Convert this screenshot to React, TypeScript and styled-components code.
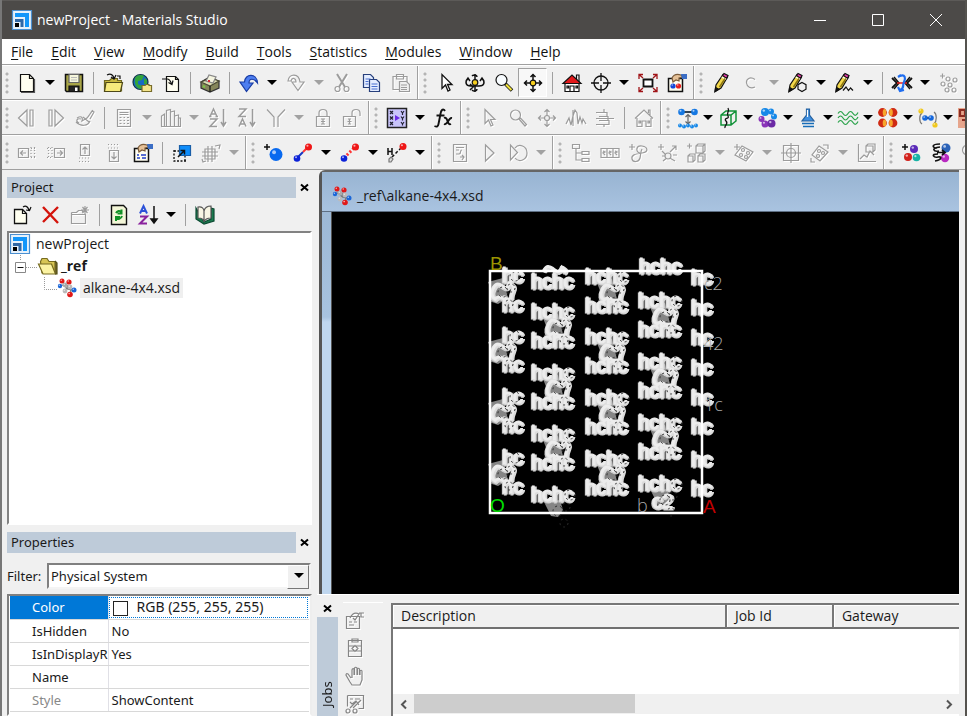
import React from "react";
import styled, { createGlobalStyle, css } from "styled-components";

const Global = createGlobalStyle`
  * { box-sizing: border-box; }
  html, body, #root { height: 100%; }
  body {
    margin: 0;
    overflow: hidden;
    background: #fff;
    color: #1a1a1a;
    font: 14px/20px "Open Sans", "Noto Sans", sans-serif;
  }
  button, select { font: inherit; color: inherit; }
`;

/* ---------- shared colours ---------- */
const face = "#f0f0f0";
const edge = "#a0a0a0";
const caption = "#becbd9";
const ui = '"Noto Sans", "Open Sans", sans-serif';

/* ---------- window frame ---------- */
const Frame = styled.div`
  height: 100vh;
  display: flex;
  flex-direction: column;
  border-left: 2px solid #777;
  border-right: 2px solid #55534f;
  background: ${face};
`;

const TitleBar = styled.header`
  display: flex;
  align-items: center;
  flex: none;
  height: 39px;
  padding-left: 10px;
  gap: 5px;
  background: #4c4a48;
  border-top: 1px solid #5c5a58;
  color: #fff;
`;

const TitleText = styled.h1`
  flex: 1;
  margin: 0;
  font-size: 14px;
  font-weight: 400;
`;

const WindowButtons = styled.div`
  display: flex;
`;

const WindowButton = styled.button`
  width: 58px;
  height: 38px;
  padding: 0;
  border: 0;
  background: transparent;
  color: #fff;
  display: grid;
  place-items: center;
`;

const MenuBar = styled.nav`
  display: flex;
  align-items: center;
  gap: 18px;
  flex: none;
  height: 26px;
  padding-left: 9px;
  background: #fff;
  border-bottom: 1px solid ${edge};
`;

const MenuButton = styled.button`
  padding: 0;
  border: 0;
  background: transparent;
  line-height: 20px;
  color: #111;
`;

const Mnemonic = styled.span`
  text-decoration: underline;
  text-underline-offset: 2px;
`;

/* ---------- toolbars ---------- */
const ToolRow = styled.div`
  display: flex;
  flex: none;
  height: 35px;
  padding-top: 1px;
  overflow: hidden;
  border-bottom: 1px solid ${edge};
  box-shadow: inset 0 1px 0 #fff;
`;

const ToolGroup = styled.div`
  display: flex;
  align-items: center;
  flex: none;
  padding-right: 2px;
  border-right: 1px solid ${edge};
  box-shadow: 1px 0 0 #fff;
  margin-right: 1px;
`;

const Grip = styled.span<{ $first?: boolean }>`
  flex: none;
  width: ${(p) => (p.$first ? 10 : 12)}px;
  height: 24px;
  background: radial-gradient(circle at 50% 3px, #b4b4b4 1px, transparent 2px) 0 0 / 100% 6px;
`;

const ToolButton = styled.button<{ $off?: boolean; $pressed?: boolean; $tight?: boolean }>`
  flex: none;
  display: grid;
  place-items: center;
  width: ${(p) => (p.$tight ? 27 : 29)}px;
  height: 29px;
  padding: 0;
  border: 1px solid transparent;
  background: transparent;
  color: ${(p) => (p.$off ? "#9c9c9c" : "#111")};
  ${(p) => p.$off && css`svg { filter: drop-shadow(1px 1px 0 #fff); }`}
  ${(p) =>
    p.$pressed &&
    css`
      background: #f8f8f8;
      border-color: #a0a0a0 #fff #fff #a0a0a0;
    `}
`;

const DropButton = styled.button<{ $off?: boolean; $tight?: boolean }>`
  flex: none;
  display: grid;
  place-items: center;
  width: ${(p) => (p.$tight ? 13 : 18)}px;
  height: 28px;
  padding: 0;
  border: 0;
  background: transparent;
  &::after {
    content: "";
    border: 5px solid transparent;
    border-bottom: 0;
    border-top-color: ${(p) => (p.$off ? "#a2a2a2" : "#000")};
  }
`;

const Separator = styled.span`
  flex: none;
  width: 10px;
  height: 22px;
  background: linear-gradient(${edge}, ${edge}) center / 1px 100% no-repeat;
`;

const Svg = styled.svg`
  display: block;
  overflow: visible;
`;

/* ---------- icon drawings ---------- */
const ball = (x: number, y: number, r: number, c: string) => (
  <g key={`${x}-${y}`} stroke="none">
    <circle cx={x} cy={y} r={r} fill={c} />
    <circle cx={x - r * 0.3} cy={y - r * 0.35} r={r * 0.3} fill="#fff" opacity=".65" />
  </g>
);

const pencil = (
  <g stroke="#111" strokeWidth="1.200">
    <path d="M3 18.500 4 12 11 1.500 15.500 4 9 15Z" fill="#f3d84a" />
    <path d="M10.500 2.500 12 .5l4 2-1.500 3Z" fill="#e23ba8" />
    <path d="M9.700 4l4.300 2.300" stroke="#fff" />
    <path d="M7.500 14 13 5.500" stroke="#8a7410" strokeWidth="1.500" />
    <path d="M3 18.500l.6-4 3 1.800Z" fill="#111" />
  </g>
);
const cursor = "M6 1.500v14l3.500-3.500 2.500 6 2-1-2.500-5.500H16Z";
const moveArrows = "M10 1v18M1 10h18M7.500 4 10 1.500 12.500 4M7.500 16 10 18.500 12.500 16M4 7.500 1.500 10 4 12.500M16 7.500 18.500 10 16 12.500";
const house = "M3 10v8.500h5V13h4v5.500h5V10M1 10.500 10 2l9 8.500M14.500 5V2H16v5M5 13h1.500v2H5ZM14 13h1.500v2H14Z";
const sheet = "M3.500 1.500h9l4 4v13h-13Z";

const icons: Record<string, React.ReactNode> = {
  fileNew: <><path d={sheet} fill="#fffef0" /><path d="M12.500 1.500v4h4" /><path d="M4 19.500h13.500V6" stroke="#555" /></>,
  save: <><path d="M1.500 1.500h17v17h-16l-1-1Z" fill="#a8a548" strokeWidth="1.500" /><path d="M5 1.500h10v8H5Z" fill="#f5f6dc" stroke="#666" /><path d="M7 4.500h6M7 7h6" stroke="#bbb" /><path d="M5 13h10v5.500H5Z" fill="#222" /><path d="M11 14.500h2.500V18H11Z" fill="#fff" stroke="none" /></>,
  openProject: <><path d="M1.500 7.500h5l2-2h6v2h4v10.500h-17Z" fill="#c9b93f" stroke="#6f6720" /><path d="M1.500 18.500 3 9.500h16.500L17.500 18.500Z" fill="#f6ea7c" stroke="#4d4818" /><path d="M4 2c4-2 6 0 7 3M8 4l3 2 2-4M14 3h3v3" /></>,
  globe: <><circle cx="8.500" cy="9" r="7.500" fill="#1769c5" stroke="#134" /><path d="M3 5c3-4 7-3 9-2l-2 4-4 1v3l4 2-1 3c-4 0-7-4-6-11Z" fill="#33a43c" stroke="none" /><path d="M12 5l3 2v4h-3Z" fill="#33a43c" stroke="none" /><path d="M10 12.500h3l1-1h3v1h2.500v6H10Z" fill="#f5e58a" stroke="#786c2a" /></>,
  import: <><path d="M5.500 3.500h9l3 3v12h-12Z" fill="#fffef0" /><path d="M14.500 3.500v3h3M1 6h5q3 0 4.500 5M7.500 9.500l3.500 2 1-4" /></>,
  printer: <><path d="M1 9 8 5l11 3v7l-9 4-9-4Z" fill="#85865a" stroke="#333" /><path d="M1 9l9 4 9-5-8-3Z" fill="#dedfb4" stroke="#4a4a35" /><path d="M6 8 9 2l7 2-3 6Z" fill="#f4f4e0" stroke="#888" /><path d="M8 8h2" stroke="#d23" strokeWidth="2" /><path d="M10 13v6" /><path d="M3 13l2 1" stroke="#7ac943" strokeWidth="2" /></>,
  undo: <path d="M18.500 10C18 0 6 0 5.500 9H1l6.500 9.500L14 10H10C10 5 15 5 18.500 10Z" fill="#4d7ef0" stroke="#183ca5" />,
  redo: <path d="M2 8C3 0 13 0 14 9h4l-6 8.500L6 9h4C10 5 6 4 5 8Z" />,
  cut: <><path d="M4 1l8 13M14 1 6 14" strokeWidth="2" /><circle cx="4.500" cy="16" r="2.500" /><circle cx="13.500" cy="16" r="2.500" /></>,
  copy: <><path d="M1.500 1.500h7l3 3v10h-10Z" fill="#e4edff" stroke="#27407c" /><path d="M7.500 6.500h7l3 3v9h-10Z" fill="#e4edff" stroke="#27407c" /><path d="M3.500 6h5M3.500 8.500h3M3.500 11h3M9.500 11h6M9.500 13.500h6M9.500 16h6" stroke="#4a70d0" /></>,
  paste: <><path d="M2 3.500h14v13H2Z" /><path d="M5.500 3V1.500h7V6h-7Z" /><path d="M8.500 8.500h7l3 3v7h-10ZM10 12h6M10 14.500h6M10 16.500h6" fill="#f0f0f0" /></>,
  cursor: <path d={cursor} fill="#fff" strokeWidth="1.300" />,
  rotate: <><path d="M10 1v18M7 3c2-2 5-1 5 1M7 17c2 2 5 1 5-1M3 6C0 8 0 13 6 13h8c6 0 6-5 3-7M1 8l2-3 2 3M15 8l2-3 2 3M5 11l3 3-3 3" strokeWidth="1.500" /><circle cx="10" cy="9.500" r="2.800" fill="#f7cf1e" /></>,
  zoom: <><circle cx="7.500" cy="7" r="5.500" fill="#f8fcff" /><path d="M11.500 11 18 17.500" strokeWidth="3.500" /><path d="M12 11.500l5.500 5.500" stroke="#f0e23b" strokeWidth="2" /></>,
  move: <><path d={moveArrows} strokeWidth="1.500" /><circle cx="10" cy="10" r="2.800" fill="#f7cf1e" /></>,
  home: <><path d="M3 10v8.500h14V10Z" fill="#fff" /><path d="M14.500 7V2H17v8" fill="#fff" /><path d="M1 10.500 10 2l9 8.500Z" fill="#e3191b" /><path d="M8 18.500V13h4v5.500M5 13h1.500v2H5ZM14 13h1.500v2H14Z" /></>,
  target: <><circle cx="10" cy="10" r="7" strokeWidth="1.300" /><path d="M10 0v8M10 12v8M0 10h8M12 10h8" strokeWidth="1.300" /></>,
  fit: <><path d="M5.500 6.500h9v7h-9Z" strokeWidth="1.800" fill="#fff" /><g stroke="#a01418" strokeWidth="1.300"><path d="M1 6V1.500h4M1 1.500 5 5M19 6V1.500h-4M19 1.500 15 5M1 14v4.500h4M1 18.500 5 15M19 14v4.500h-4M19 18.500 15 15" /></g></>,
  style: <><path d="M1.500 5.500h14v13h-14Z" fill="#fffef0" strokeWidth="1.500" /><path d="M5 5c2-4 6-4 9-3l2 2-4 1v3L9 7 6 9Z" fill="#e5c198" stroke="#7b5c3b" /><path d="M14 1h6v5h-5Z" fill="#3b6ec5" stroke="none" />{ball(6, 13, 2.6, "#1247d8")}{ball(11.5, 13, 2.6, "#e51e1e")}</>,
  pencil,
  ring: <path d="M14 6.500C9 3 5 6 5.500 10s4 6 8.500 4" />,
  pencilRing: <g><g transform="translate(-2 0)">{pencil}</g><path d="M14 9.500l4 2.200v4.500L14 18.500l-4-2.300v-4.500Z" fill="#f0f0f0" strokeWidth="1.200" /></g>,
  pencilChain: <g><g transform="translate(-2 0)">{pencil}</g><path d="M8 17.500l3-3.500 2.500 3.500 2-2.500 2.500 2.500" /></g>,
  clean: <><path d="M0 5l5 5-5 5M20 5l-5 5 5 5" strokeWidth="1.800" /><path d="M2 4l5 6-5 6M18 4l-5 6 5 6" strokeWidth="1.500" /><path d="M5 10h10" stroke="#e22" strokeWidth="1.500" /><path d="M8 3c5-2 6 2 4 6s1 6-4 8M6 4l3-2M6 14l2 4 4-1" stroke="#1e6df0" strokeWidth="2.200" /></>,
  atoms: <><circle cx="9" cy="6" r="2" /><circle cx="16" cy="7" r="2" /><circle cx="4" cy="11" r="2" /><circle cx="11" cy="12" r="2" /><circle cx="8" cy="17" r="2" /><circle cx="15" cy="17" r="2" /><path d="M1 3h5M3.500.5v5" /></>,
  prev: <path d="M10 2v16L1.500 10ZM13 2h3v16h-3Z" />,
  next: <path d="M6 2v16H3V2ZM9 2l8.500 8L9 18Z" />,
  brush: <path d="M2 10c5-3 6 0 5 3l5-3 6-8M1 14c5 5 12 4 14-1M4 15c-4-2-2-5 2-4M8 9l6 5M13 9l4-6 2 1-4 7" />,
  calc: <path d="M3.500 1.500h13v17h-13ZM5.500 4.500h9M5.500 6.500h9M5.500 9.500h2M9.500 9.500h1.500M13 9.500h2M5.500 12.500h2M9.500 12.500h1.500M13 12.500h2M5.500 15.500h2M9.500 15.500h1.500M13 15.500h2" />,
  bars: <path d="M.5 18.500V8l3-2v12.500M5.500 18.500V2.500l4-1v17M9.500 4l4-1v15.500M13.500 8l4-1v11.500M17.500 10h2v8.500M0 18.500h20" />,
  sortAZ: <g strokeWidth="1.500"><path d="M2 8.500 5.500 1 9 8.500M3.500 6h4M1 8.500h2.500M7.500 8.500H10M2 11h7L2 18.500h7M15.500 1v16M13 14l2.500 4 2.500-4" /></g>,
  sortZA: <g strokeWidth="1.500"><path d="M2 1h7L2 8.500h7M2 18.500 5.500 11 9 18.500M3.500 16h4M15.500 1v16M13 14l2.500 4 2.500-4" /></g>,
  filter: <path d="M1 1.500 8 9v10M19 1.500 12 9v10" />,
  lock: <path d="M3.500 8.500h13v10h-13ZM6 8V5q0-3.500 4-3.500T14 5v3M8 11h4M8 16h4M10 11v5M8 13.500h4" />,
  unlock: <path d="M1.500 8.500h12v10h-12ZM10 8V5q0-3.500 4-3.500T18 5v3M6 11h3M6 16h3M7.500 11v5M5.500 13.500h4" />,
  script: <><path d="M.5.500h19v19H.500Z" fill="#c8c4fa" stroke="#222" strokeWidth="1.500" /><path d="M3 3l3 3M6 3 3 6M3 8.500l3 3M6 8.500l-3 3M3 14l3 3M6 14l-3 3M14 3l1.500 2L17 3M15.500 5v2M14 8.500l1.500 2 1.500-2M15.500 10.500v2M14 14l1.500 2 1.500-2M15.500 16v1.500" stroke="#223" /><path d="M8 7l5 3-5 3Z" fill="#6b2be8" stroke="none" /></>,
  fx: <g strokeWidth="1.900"><path d="M11 3c-2-3-4-1-4.500 3L4.500 16c-.5 3-2 3-4 2M2.500 7.500h8" /><path d="M10 10c4-2 3 8 7 6M18 10c-4-1-4 8-8 6" /></g>,
  gCursor: <path d={cursor} />,
  gZoom: <><circle cx="7.500" cy="7" r="5" /><path d="M11 11l6 7 1.500-1.500-6-6.500Z" /></>,
  gMove: <><path d={moveArrows} /><circle cx="10" cy="10" r="2.500" fill="#f0f0f0" /></>,
  wave: <path d="M0 16l3-6 2 7 2-9 2-6 2 3 1 11 2-7 2 6 1-4 3 5M7 2v16" />,
  align: <path d="M1 4.500h11v4H4M1 10.500h18M4 12.500h10v4H1M9 1v4M9 16v3M13 8v5" />,
  gHome: <path d={house} />,
  bead: <><path d="M5 4h10" stroke="#345" strokeWidth="2" />{ball(3.5, 4, 3.3, "#1678e2")}{ball(16.5, 4, 3.3, "#1678e2")}<path d="M10 7v8M7.500 9 10 6.500 12.500 9M7.500 13.500 10 16l2.500-2.500" stroke="#666" />{[1, 5, 9, 13, 17].map((x, i) => ball(x + 1, i % 2 ? 18.5 : 17.5, 2, "#1688e8"))}</>,
  cell: <><path d="M3 7l5-4h10v10l-5 4H3ZM3 7h10l5-4M13 7v10" stroke="#119238" strokeWidth="1.500" /><path d="M10 0c2 3-2 5 0 8s-5 2-2 5-2 4-1 7" strokeWidth="1.300" /></>,
  cluster: <>{ball(7, 4, 4, "#1688e8")}{ball(13, 3.5, 3, "#1688e8")}{ball(16, 8.5, 3, "#1688e8")}{ball(3.5, 11, 3, "#8a35b8")}{ball(7, 16, 3.5, "#8a35b8")}{ball(13.5, 15.5, 4, "#6c2aa5")}</>,
  flask: <><path d="M8.500 1h3v6l4.500 6H4l4.500-6Z" fill="#3f8fe0" stroke="#25609e" /><path d="M4 15.500h12M5 18.500h11" stroke="#176db8" strokeWidth="1.600" /><path d="M9.500 2v7" stroke="#fff" /></>,
  waves: <g stroke="#27a148" strokeWidth="1.200">{[5.5, 10, 14.5].map((y) => <path key={y} d={`M0 ${y}q2.500-4 5 0t5 0 5 0 5-1`} />)}</g>,
  orbitals: <>{[[4.5, 4.5], [15, 4.5], [4.5, 15], [15, 15]].map(([x, y]) => <g key={`${x}-${y}`} stroke="none"><circle cx={x} cy={y} r="4.400" fill="#cf2a14" /><ellipse cx={x + (x < 10 ? 2 : -2)} cy={y} rx="1.800" ry="3.500" fill="#f7a52c" /></g>)}</>,
  linker: <><path d="M4 5C1 7 1 14 4 16M16 4c3 2 3 9 0 12" stroke="#777" /><path d="M6 10h8" stroke="#333" strokeWidth="2" />{ball(3, 3, 2.6, "#f0c81f")}{ball(7, 10, 2.8, "#1668dd")}{ball(13, 10, 2.8, "#1668dd")}{ball(17, 17, 2.6, "#f0c81f")}</>,
  brick: <><path d="M0 0h20v20H0Z" fill="#e6a58c" stroke="none" /><path d="M2 2h16v6H2ZM7 3v5M4 12h14M8 12v6" stroke="#8c2d22" strokeWidth="2.200" /></>,
  colLeft: <><path d="M1.500 5.500h10v9h-10ZM9 10H3.500M6 7.500 3.500 10 6 12.500" /><path d="M14 4v12M17.500 4v12M14 5.500h5M14 14.500h5" strokeDasharray="1 2" /></>,
  colRight: <><path d="M8.500 5.500h10v9h-10ZM11 10h5.500M14 7.500l2.500 2.500-2.500 2.500" /><path d="M2.500 4v12M6 4v12M1 5.500h6M1 14.500h6" strokeDasharray="1 2" /></>,
  rowUp: <><path d="M5.500 1.500h9v11h-9ZM10 11V4M7.500 6.500 10 4l2.500 2.500" /><path d="M4 15h12M4 18.500h12" strokeDasharray="1 2" /></>,
  rowDown: <><path d="M5.500 7.500h9v11h-9ZM10 9v7M7.500 13.500 10 16l2.500-2.500" /><path d="M4 1.500h12M4 5h12" strokeDasharray="1 2" /></>,
  props: <><path d="M1.500 5.500h14v13h-14Z" fill="#fffef0" strokeWidth="1.500" /><path d="M5 5c2-4 6-4 9-3l2 2-4 1v3L9 7 6 9Z" fill="#e5c198" stroke="#7b5c3b" /><path d="M14 1h6v5h-5Z" fill="#3b6ec5" stroke="none" /><path d="M4 12h2M8 12h5M4 15h3M9 15h4" stroke="#2540c8" strokeWidth="1.500" /></>,
  expand: <><path d="M7.500 2.500h11v10h-11Z" fill="#0f8dfa" stroke="#1a5fa8" /><path d="M2 7v11h12M2 8h5M13 18v-5" strokeDasharray="2 1.500" strokeWidth="1.300" /><path d="M6 14l6-6M8.500 7.500h4V11.500" strokeWidth="1.500" /></>,
  gridRotate: <path d="M4 6h10v10H4ZM7 3v16M11 3v16M1 9h16M1 13h16M14 3l5-1-1 4M1 16l1 3 3-1" />,
  addAtom: <>{ball(12, 11.5, 6.5, "#0869ef")}<path d="M0 4h6M3 1v6" strokeWidth="1.500" /></>,
  bond: <><path d="M4 15 10 9" stroke="#1637c4" strokeWidth="2" /><path d="M10 9l5-5" stroke="#f33" strokeWidth="2" />{ball(4, 15.5, 3.3, "#0c22d8")}{ball(15.5, 4, 3.5, "#ef1616")}</>,
  bondDash: <><path d="M4 15 15 4" stroke="#f33" strokeWidth="3" strokeDasharray="2 2" />{ball(4, 15.5, 3.3, "#0c22d8")}{ball(15.5, 4, 3.5, "#ef1616")}</>,
  hBond: <><path d="M5 14 14 5" strokeWidth="1.500" strokeDasharray="3 2" /><path d="M1 5v7M5 5v7M1 8.500h4" strokeWidth="1.500" /><path d="M2 19v-3l2-2 2 2-2 3Z" fill="#ddd" stroke="#777" />{ball(16, 3.5, 3.5, "#ef1616")}</>,
  pageScript: <path d="M3.500 1.500h13v17h-13ZM6 4.500h8M6 7h3M12 7c-3 0 0 4-3 4h-3M10 14h4M12 12l2 2-2 3" />,
  play: <path d="M6.500 2v16L15 10Z" />,
  loop: <path d="M2.500 2v15l7-7.500ZM7 5c4-5 12-2 12 5s-8 10-12 5" />,
  hierarchy: <path d="M1.500 1.500h7v4h-7ZM11 8.500h7v3h-7ZM11 15.500h7v3h-7ZM5 5.500V17h6M5 10h6" />,
  cells: <path d="M1 5.500h18v9H1ZM7 5.500v9M13 5.500v9M3 8l2 1-2 1 2 2M9 8l2 1-2 1 2 2M15 8l2 1-2 1 2 2" />,
  loopAdd: <path d="M0 4h6M3 1v6M11 10C6 9 7 2 13 3s7 6 0 7-11 2-10 6 7 3 8-1 0-5 2-9" />,
  burst: <><path d="M0 4h6M3 1v6M12 9l6-6M14 3h4v4M10 14l-6-6M10 14l7 4M10 14l-5 4M4 13h3M15 12h4" /><circle cx="10" cy="13" r="3" fill="#f0f0f0" /></>,
  boxes: <path d="M0 3h5M2.500.5v5M9 3l2-2h7v7l-2 2H9ZM9 3h7v7M16 3l2-2M1 13l2-2h5v6l-2 2H1ZM1 13h5v6M11 13l2-2h5v6l-2 2h-5ZM11 13h5v6" />,
  lattice: <><path d="M0 4h6M3 1v6M8 3l11 6-7 9-11-6Z" /><circle cx="9" cy="7" r="1.500" /><circle cx="14" cy="10" r="1.500" /><circle cx="7" cy="12" r="1.500" /><circle cx="12" cy="14" r="1.500" /></>,
  crossCell: <><path d="M2.500 2.500h15v15h-15ZM10 0v20M0 10h20" /><circle cx="10" cy="10" r="4.500" /></>,
  latticeTurn: <><path d="M9 3l9 6-8 9-8-6ZM13 2h5v4M1 15v4h4" /><circle cx="9" cy="8" r="1.500" /><circle cx="13" cy="10" r="1.500" /><circle cx="8" cy="13" r="1.500" /></>,
  chart: <path d="M1.500 1v17.500H19M3 16l4-4 3 2 3-6 4 4M9 3l2-2h7v6l-2 2H9ZM9 3h7v6" />,
  triad: <>{ball(12, 6, 4, "#5a2ab8")}{ball(6, 14, 4, "#d3221c")}{ball(14.5, 14.5, 3.8, "#17b3a6")}<path d="M0 4h6M3 1v6" strokeWidth="1.500" /></>,
  swap: <>{ball(15, 5, 4.5, "#2a62b8")}{ball(14, 15, 4.2, "#b82ac0")}<path d="M9 1c-9 0-8 4-3 4M9 4c-10 1-6 5-1 4M7 11c-8 0-4 4 0 3s4 3-3 4M6 9.500h8M11 7l3 2.500-3 2.500" strokeWidth="1.700" /></>,
  newDoc: <><path d="M2.500 4.500h8l4 4v10h-12Z" fill="#fffff0" strokeWidth="1.300" /><path d="M10.500 4.500v4h4M11 2c3-2 5 0 6 3M14 5l3.500.5L19 2" /></>,
  remove: <path d="M2 2l15 16M17 2 2 17" stroke="#d4140c" strokeWidth="2.400" />,
  newFolder: <path d="M1.500 7.500h5l2-2h4v2M1.500 7.500v11h14v-9h-14M15 1v8M11 5h8M12.500 2l5 6M17.500 2l-5 6" />,
  refresh: <><path d="M2.500.5h12l3 3v16h-15Z" fill="#f3f6d8" strokeWidth="1.400" /><path d="M7 8c1-2 4-3 5-1M12.500 4.500v4h-4M13 11c-1 3-4 4-6 2M7 16v-4h4" stroke="#129128" strokeWidth="2" /></>,
  sortTree: <><g strokeWidth="2"><path d="M2 8.500 5.500 1 9 8.500M3.500 6h4" stroke="#2d52d8" /><path d="M2 11.500h7l-7 7h7" stroke="#8a229d" /></g><path d="M16 1v16M13 14l3 4 3-4Z" fill="#111" strokeWidth="1.500" /></>,
  book: <><path d="M1 3v11l8 5 10-3V4l-3-1v11l-7 3Z" fill="#1a7b4f" stroke="#0c4a32" /><path d="M3 2c4-1 6 2 6 4v11c0-3-3-4-6-4ZM9 6c1-4 4-5 7-5v12c-4 0-6 1-7 4Z" fill="#f8f6e4" stroke="#555" /></>,
  jobProps: <path d="M1.500 6.500h13v12h-13ZM5 8c2-4 5-6 9-4l-4 6-2-2M14 3h2v4h3M16 3h3M4 12h3M9 12h3M4 15h5" />,
  jobMap: <path d="M3.500 2.500h13v16h-13ZM7 1h6v3H7ZM3 8h14M3 13h14M7 10.500l3-3 3 3-3 3Z" />,
  hand: <path d="M6 12 3 8q-2-1-2 1l4 7 2 3h8l2-5V5q-1-1.500-2 0v4M14.500 9V3q-1-1.500-2 0v6M12 9V2q-1.500-1.500-2.500 0v7M9 9V3Q7.500 2 7 4v8" />,
  jobLog: <path d="M2.500 1.500h16v13h-5M2.500 1.500v11M5 5h3M10 5h5M5 8l2 2 4-3 3 4M8 14l8-8M1 17a2 2 0 104 0 2 2 0 10-4 0M8 17a2 2 0 104 0 2 2 0 10-4 0M5 14l6-6" />,
  studio: <><path d="M.5.500h19v19H.500Z" fill="#e6f1fb" stroke="#4b8fd0" /><path d="M3 3h14v14h-4V7H3Z" fill="#1296fa" stroke="none" /><path d="M3 9h8.500v8H8.500v-5H3Z" fill="#3067a5" stroke="none" /><path d="M3 13h4v4H3Z" fill="#000" stroke="none" /></>,
  folder: <><path d="M2.500 5.500 4 2.500h5l2 3h6V17H4Z" fill="#d7c554" stroke="#766b20" /><path d="M.5 8h13l4 10H5Z" fill="#fbf3a2" stroke="#766b20" /><path d="M17 5l2 2v11h-2" fill="#6d6426" stroke="#555018" /></>,
  molecule: <><path d="M5 3l5 8 6 1M3 8l6-2 5 7-2 4M8 12l5-4" stroke="#777" />{ball(5, 3, 2.5, "#e01818")}{ball(12, 4, 2.6, "#e01818")}{ball(3, 8, 2.2, "#1a66d8")}{ball(8, 7, 2.4, "#aaa")}{ball(13, 9, 2.4, "#bbb")}{ball(8, 13, 2.4, "#bbb")}{ball(17, 12, 2.5, "#1a66d8")}{ball(13, 16.5, 2.8, "#e01818")}</>,
};

const Icon = ({ name, size = 20 }: { name: string; size?: number }) => (
  <Svg width={size} height={size} viewBox="0 0 20 20" fill="none" stroke="currentColor" strokeWidth="1.200" aria-hidden="true">
    {icons[name]}
  </Svg>
);

/* Toolbar notation: "|" separator, "v" drop-down, leading "-" disabled, leading "+" pressed. */
type BarDef = { items: string; tight?: boolean };

const rows: BarDef[][] = [
  [
    { items: "fileNew v save | openProject globe import | printer | undo v -redo -v -cut copy -paste" },
    { items: "cursor rotate zoom +move | home target v fit style" },
    { items: "pencil -ring -v pencilRing v pencilChain v | clean v -atoms" },
  ],
  [
    { items: "-prev -next -brush | -calc -v -bars -v -sortAZ -sortZA -filter -v -lock -unlock" },
    { items: "script v fx" },
    { items: "-gCursor -gZoom -gMove -wave -align | -gHome" },
    { items: "bead v cell v cluster v flask v waves v orbitals v linker v brick", tight: true },
  ],
  [
    { items: "-colLeft -colRight -rowUp -rowDown props | expand -gridRotate -v" },
    { items: "addAtom bond v bondDash v hBond v" },
    { items: "-pageScript -play -loop -v" },
    { items: "-hierarchy -cells -loopAdd -burst -boxes -v -lattice -v -crossCell -latticeTurn -v -chart" },
    { items: "triad swap -gZoom" },
  ],
];

const Items = ({ items, tight }: BarDef) => (
  <>
    {items.split(" ").map((token, i) => {
      if (token === "|") return <Separator key={i} />;
      const off = token.startsWith("-");
      const pressed = token.startsWith("+");
      const name = off || pressed ? token.slice(1) : token;
      if (name === "v") return <DropButton key={i} $off={off} $tight={tight} aria-label="More options" />;
      return (
        <ToolButton key={i} $off={off} $pressed={pressed} $tight={tight} aria-label={name}>
          <Icon name={name} />
        </ToolButton>
      );
    })}
  </>
);

/* ---------- docked panels ---------- */
const Workspace = styled.div`
  flex: 1;
  min-height: 0;
  display: grid;
  grid-template-columns: 316px minmax(0, 1fr);
`;

const Dock = styled.aside`
  display: flex;
  flex-direction: column;
  min-height: 0;
  padding: 7px 6px 0 5px;
`;

const CaptionRow = styled.div`
  display: flex;
  align-items: center;
  flex: none;
  height: 21px;
`;

const Caption = styled.h2`
  flex: 1;
  margin: 0;
  padding-left: 4px;
  background: ${caption};
  font: 400 13px/21px ${ui};
`;

const CloseButton = styled.button`
  width: 16px;
  height: 18px;
  flex: none;
  padding: 0;
  border: 0;
  background: transparent;
  color: #000;
  display: grid;
  place-items: center;
`;

const CloseMark = () => (
  <Svg width="7" height="7" viewBox="0 0 7 7" stroke="currentColor" strokeWidth="2"><path d="M0 .5l7 6M7 .5l-7 6" /></Svg>
);

const PanelTools = styled.div`
  display: flex;
  align-items: center;
  flex: none;
  height: 33px;
`;

const Tree = styled.ul`
  flex: 1;
  min-height: 0;
  margin: 0 0 7px;
  padding: 0 0 0 1px;
  list-style: none;
  background: #fff;
  border: 2px solid;
  border-color: #828282 #fff #fff #828282;
`;

const TreeItem = styled.li<{ $level: number }>`
  display: flex;
  align-items: center;
  height: 22px;
  padding-left: ${(p) => [0, 4, 34][p.$level]}px;
`;

const TreeLabel = styled.span<{ $bold?: boolean; $selected?: boolean }>`
  margin-left: ${(p) => (p.$bold ? 0 : 3)}px;
  padding: 0 3px;
  font-weight: ${(p) => (p.$bold ? 700 : 400)};
  background: ${(p) => (p.$selected ? "#efefef" : "transparent")};
`;

const FilterRow = styled.label`
  display: flex;
  align-items: center;
  flex: none;
  height: 26px;
  margin: 10px 0 5px;
  font: 13px/20px ${ui};
`;

const FilterName = styled.span`
  width: 40px;
`;

const SelectWrap = styled.span`
  flex: 1;
  display: flex;
  height: 26px;
  margin-right: 1px;
  background: #fff;
  border: 2px solid;
  border-color: #808080 #f4f4f4 #f4f4f4 #808080;
  position: relative;
  &::before {
    content: "";
    position: absolute;
    right: 0;
    top: 0;
    width: 20px;
    height: 22px;
    background: ${face};
    border: 1px solid;
    border-color: #fff #777 #777 #fff;
    pointer-events: none;
  }
  &::after {
    content: "";
    position: absolute;
    right: 5px;
    top: 8px;
    border: 5px solid transparent;
    border-bottom: 0;
    border-top-color: #000;
    pointer-events: none;
  }
`;

const Select = styled.select`
  flex: 1;
  appearance: none;
  padding: 0 2px;
  border: 0;
  background: transparent;
  outline: 0;
`;

const PropertyBox = styled.div`
  flex: none;
  height: 122px;
  overflow: hidden;
  background: #fff;
  padding: 0 1px;
  border: 2px solid;
  border-color: #808080 #eee transparent #808080;
`;

const PropertyTable = styled.table`
  width: 100%;
  table-layout: fixed;
  border-collapse: collapse;
  font: 13px/18px ${ui};
`;

const PropertyName = styled.th<{ $selected?: boolean; $muted?: boolean }>`
  width: 98px;
  height: 23px;
  padding: 0 0 0 22px;
  overflow: hidden;
  text-align: left;
  font-weight: 400;
  white-space: nowrap;
  border-right: 1px solid #e0e0e6;
  border-bottom: 1px solid #d8d8d8;
  background: ${(p) => (p.$selected ? "#0078d7" : "#fff")};
  color: ${(p) => (p.$selected ? "#fff" : p.$muted ? "#888" : "#1a1a1a")};
`;

const PropertyValue = styled.td<{ $selected?: boolean }>`
  padding: 0 3px;
  border-bottom: 1px solid #d8d8d8;
  font-size: ${(p) => (p.$selected ? 14 : 13)}px;
  outline: ${(p) => (p.$selected ? "1px dotted #0078d7" : "none")};
  outline-offset: -2px;
`;

const Swatch = styled.span`
  display: inline-block;
  width: 15px;
  height: 15px;
  margin: 0 9px 0 1px;
  vertical-align: middle;
  border: 1px solid #222;
`;

/* ---------- document area ---------- */
const Main = styled.main`
  display: flex;
  flex-direction: column;
  min-width: 0;
  min-height: 0;
  padding-right: 6px;
`;

const DocWindow = styled.section`
  flex: 1;
  min-height: 0;
  display: flex;
  flex-direction: column;
  margin-left: 1px;
  padding-left: 9px;
  border-left: 3px solid #555;
  border-top: 2px solid #666;
  border-top-left-radius: 6px;
  background: linear-gradient(#98b4d2 0, #a8c3df 145px, #bfd6ee 150px);
`;

const DocTitle = styled.h2`
  display: flex;
  align-items: center;
  flex: none;
  gap: 5px;
  height: 40px;
  margin: 0 0 0 -9px;
  padding: 8px 0 0 10px;
  font-size: 14px;
  font-weight: 400;
  background: linear-gradient(#98b4d2, #a9c3e0);
  border-bottom: 1px solid #5e6f83;
`;

const Viewport = styled.div`
  flex: 1;
  min-height: 0;
  padding-top: 38px;
  background: #000;
  overflow: hidden;
  border-left: 1px solid #555;
`;

/* Each unit is an upper and a lower atom-type label joined by a shaded stem. */
const units: { x: number; ys: number[]; wide: boolean }[] = [
  { x: 502, ys: [282, 342, 403, 464], wide: false },
  { x: 531, ys: [318, 379, 440, 501], wide: true },
  { x: 585, ys: [283, 343, 404, 465], wide: true },
  { x: 638, ys: [307, 368, 429, 490], wide: true },
];

const Smear = styled.g`
  filter: drop-shadow(2px 1px 0 #dcdcdc) drop-shadow(-1px 1px 0 #cfcfcf);
`;

const Marks = styled.g`
  fill: none;
  stroke: #2b2b2b;
  stroke-width: 1px;
  stroke-dasharray: 2 3;
`;

const Label = ({ x, y, text }: { x: number; y: number; text: string }) => (
  <text x={x} y={y}>{text}</text>
);

const Knot = ({ x, y }: { x: number; y: number }) => (
  <path
    d={`M${x} ${y}q3-8 9-3t7-3q6 2 4 7t-2 8q-6 3-9 0t-7 1q-5-3-2-10`}
    strokeWidth="3"
  />
);

const knots = units.flatMap((u) =>
  u.ys.map((y) => ({ x: u.wide ? u.x + 17 : u.x - 9, y: y + 5, last: y > 480 }))
);

const Structure = () => (
  <Svg width="400" height="270" viewBox="332 250 400 270">
    <g fill="#858585">
      {knots.map((k) => (
        <path key={`${k.x}-${k.y}`} d={k.last ? `M${k.x - 4} ${k.y - 4}l16-2 3 10-5 7-7-1z` : `M${k.x - 5} ${k.y - 5}l15-4 5 20-10 6-9-3 3-9z`} />
      ))}
    </g>
    <Smear fill="#ececec" stroke="#ececec" strokeWidth="1" fontFamily="Liberation Sans, sans-serif" fontSize="20">
      {units.map((u) =>
        u.ys.map((y) => (
          <g key={`${u.x}-${y}`}>
            <Label x={u.x} y={y} text={u.wide ? "hchc" : "hc"} />
            {y <= 480 && <Label x={u.x} y={y + 29} text={u.wide ? "hchc" : "hc"} />}
          </g>
        ))
      )}
      <Label x={531} y={288} text="hchc" />
      <Label x={639} y={273} text="hchc" />
      <Label x={652} y={508} text="c2" />
      {[284, 314, 344, 374, 404, 433, 466, 495].map((y) => (
        <Label key={y} x={691} y={y} text="hc" />
      ))}
      <g fill="none">
        {knots.filter((k) => !k.last).map((k) => <Knot key={`${k.x}-${k.y}`} x={k.x} y={k.y + 2} />)}
        <path d="M544 271q3-8 9-2t9-2q5 3 2 6" strokeWidth="3" />
      </g>
    </Smear>
    <Marks>
      {knots.map((k) => (
        <g key={`${k.x}-${k.y}`}>
          <circle cx={k.x + 10} cy={k.y + 5} r="5" />
          <circle cx={k.x + 18} cy={k.y + 1} r="4" />
          <circle cx={k.x + 16} cy={k.y + 17} r="4" />
          <circle cx={k.x + 22} cy={k.y - 11} r="5" />
        </g>
      ))}
    </Marks>
    <path d="M490 271h212v242H490Z" fill="none" stroke="#fff" strokeWidth="2.500" />
    <g fontFamily="Open Sans, sans-serif" fontWeight="300" fontSize="18" fill="#aaa">
      <text x="704" y="290">c2</text>
      <text x="703" y="350">42</text>
      <text x="704" y="411">1c</text>
      <text x="637" y="512">b</text>
    </g>
    <g fontFamily="Liberation Sans, sans-serif" fontSize="19">
      <text x="490" y="270" fill="#9a9400">B</text>
      <text x="490" y="512" fill="#00e000">O</text>
      <text x="703" y="513" fill="#c00000">A</text>
    </g>
  </Svg>
);

/* ---------- jobs ---------- */
const JobsPanel = styled.section`
  flex: none;
  height: 122px;
  display: grid;
  grid-template-columns: 21px 53px minmax(0, 1fr);
  margin-left: -1px;
  border-top: 1px solid #fff;
`;

const JobsTab = styled.div`
  display: flex;
  flex-direction: column;
  padding-top: 4px;
`;

const JobsTitle = styled.h2`
  flex: 1;
  margin: 0;
  padding-top: 9px;
  background: ${caption};
  writing-mode: vertical-rl;
  transform: rotate(180deg);
  font: 400 13px/21px ${ui};
`;

const TabClose = styled(CloseButton)`
  width: 20px;
`;

const JobTools = styled.div`
  display: flex;
  flex-direction: column;
  margin: 7px 8px 0 5px;
  padding-top: 3px;
  border-top: 1px solid #fff;
  overflow: hidden;
  button { flex: none; height: 28px; width: 23px; color: #858585; }
`;

const JobsList = styled.div`
  display: flex;
  flex-direction: column;
  margin-top: 8px;
  background: #fff;
  border-left: 2px solid #777;
  border-top: 2px solid #777;
`;

const JobsTable = styled.table`
  width: 100%;
  table-layout: fixed;
  border-collapse: separate;
  border-spacing: 0;
`;

const HeadCell = styled.th<{ $width?: string }>`
  width: ${(p) => p.$width ?? "auto"};
  height: 24px;
  padding: 0 0 0 8px;
  text-align: left;
  font-weight: 400;
  line-height: 20px;
  background: ${face};
  border-right: 2px solid #777;
  border-bottom: 2px solid #707070;
  box-shadow: inset 1px 1px 0 #fff;
  &:last-child { border-right: 0; }
`;

const ScrollBar = styled.div`
  display: grid;
  grid-template-columns: 21px 39% 1fr 21px;
  height: 20px;
  margin: auto 0 2px;
  background: ${face};
`;

const ScrollButton = styled.button`
  padding: 0;
  border: 0;
  background: transparent;
  display: grid;
  place-items: center;
  color: #555;
`;

const Thumb = styled.div`
  background: #cdcdcd;
  height: 19px;
`;

const menus = ["File", "Edit", "View", "Modify", "Build", "Tools", "Statistics", "Modules", "Window", "Help"];
const properties = [
  ["Color", "RGB (255, 255, 255)"],
  ["IsHidden", "No"],
  ["IsInDisplayR", "Yes"],
  ["Name", ""],
  ["Style", "ShowContent"],
];

const Branch = () => (
  <Svg width="24" height="22" viewBox="0 0 24 22" fill="none" stroke="#999">
    <path d="M6.500 0v6M12 12.500h11" strokeDasharray="1 1" />
    <path d="M1.500 7.500h10v10h-10Z" fill="#fff" stroke="#888" />
    <path d="M3.500 12.500h6" stroke="#111" />
  </Svg>
);

const Elbow = () => (
  <Svg width="13" height="22" viewBox="0 0 13 22" fill="none" stroke="#999">
    <path d="M.5 0v12.500H13" strokeDasharray="1 1" />
  </Svg>
);

export default function App() {
  return (
    <>
      <Global />
      <Frame>
        <TitleBar>
          <Icon name="studio" />
          <TitleText>newProject - Materials Studio</TitleText>
          <WindowButtons>
            <WindowButton aria-label="Minimize"><Svg width="12" height="12" stroke="#fff"><path d="M0 6.500h12" /></Svg></WindowButton>
            <WindowButton aria-label="Maximize"><Svg width="12" height="12" stroke="#fff" fill="none"><path d="M.5.500h11v11H.500Z" /></Svg></WindowButton>
            <WindowButton aria-label="Close"><Svg width="12" height="12" stroke="#fff"><path d="M0 0l12 12M12 0 0 12" /></Svg></WindowButton>
          </WindowButtons>
        </TitleBar>
        <MenuBar>
          {menus.map((m) => (
            <MenuButton key={m}><Mnemonic>{m[0]}</Mnemonic>{m.slice(1)}</MenuButton>
          ))}
        </MenuBar>
        {rows.map((groups, r) => (
          <ToolRow key={r}>
            {groups.map((g, i) => (
              <ToolGroup key={i}>
                <Grip $first={i === 0} />
                <Items {...g} />
              </ToolGroup>
            ))}
          </ToolRow>
        ))}
        <Workspace>
          <Dock>
            <CaptionRow>
              <Caption>Project</Caption>
              <CloseButton aria-label="Close Project"><CloseMark /></CloseButton>
            </CaptionRow>
            <PanelTools>
              <Items items="newDoc remove -newFolder | refresh sortTree v | book" />
            </PanelTools>
            <Tree>
              <TreeItem $level={0}><Icon name="studio" /><TreeLabel>newProject</TreeLabel></TreeItem>
              <TreeItem $level={1}><Branch /><Icon name="folder" size={20} /><TreeLabel $bold>_ref</TreeLabel></TreeItem>
              <TreeItem $level={2}><Elbow /><Icon name="molecule" /><TreeLabel $selected>alkane-4x4.xsd</TreeLabel></TreeItem>
            </Tree>
            <CaptionRow>
              <Caption>Properties</Caption>
              <CloseButton aria-label="Close Properties"><CloseMark /></CloseButton>
            </CaptionRow>
            <FilterRow>
              <FilterName>Filter:</FilterName>
              <SelectWrap>
                <Select defaultValue="Physical System"><option>Physical System</option></Select>
              </SelectWrap>
            </FilterRow>
            <PropertyBox>
              <PropertyTable>
                <tbody>
                  {properties.map(([name, value], i) => (
                    <tr key={name}>
                      <PropertyName scope="row" $selected={i === 0} $muted={name === "Style"}>{name}</PropertyName>
                      <PropertyValue $selected={i === 0}>{i === 0 && <Swatch />}{value}</PropertyValue>
                    </tr>
                  ))}
                </tbody>
              </PropertyTable>
            </PropertyBox>
          </Dock>
          <Main>
            <DocWindow>
              <DocTitle><Icon name="molecule" />_ref\alkane-4x4.xsd</DocTitle>
              <Viewport><Structure /></Viewport>
            </DocWindow>
            <JobsPanel>
              <JobsTab>
                <TabClose aria-label="Close Jobs"><CloseMark /></TabClose>
                <JobsTitle>Jobs</JobsTitle>
              </JobsTab>
              <JobTools>
                <Items items="-jobProps -jobMap -hand -jobLog" />
              </JobTools>
              <JobsList>
                <JobsTable>
                  <thead>
                    <tr>
                      <HeadCell $width="59%">Description</HeadCell>
                      <HeadCell $width="107px">Job Id</HeadCell>
                      <HeadCell>Gateway</HeadCell>
                    </tr>
                  </thead>
                </JobsTable>
                <ScrollBar>
                  <ScrollButton aria-label="Scroll left"><Svg width="8" height="9" fill="none" stroke="currentColor" strokeWidth="2"><path d="M6 .5 2 4.500l4 4" /></Svg></ScrollButton>
                  <Thumb />
                  <span />
                  <ScrollButton aria-label="Scroll right"><Svg width="8" height="9" fill="none" stroke="currentColor" strokeWidth="2"><path d="M2 .5l4 4-4 4" /></Svg></ScrollButton>
                </ScrollBar>
              </JobsList>
            </JobsPanel>
          </Main>
        </Workspace>
      </Frame>
    </>
  );
}
